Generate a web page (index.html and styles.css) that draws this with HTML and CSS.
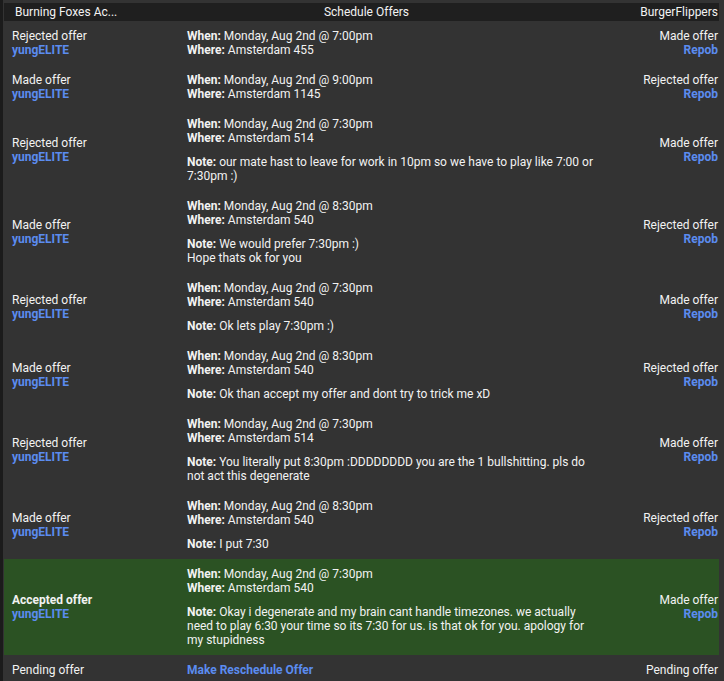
FILE: index.html
```html
<!DOCTYPE html>
<html lang="en">
<head>
  <meta charset="UTF-8" />
  <title>Schedule Offers</title>
  <link rel="stylesheet" href="styles.css">
</head>
<body>

<div class="panel">
  <div class="offers-head">
    <span class="head-left">Burning Foxes Ac...</span>
    <span class="head-mid">Schedule Offers</span>
    <span class="head-right">BurgerFlippers</span>
  </div>

  <div class="offer">
    <div class="side">Rejected offer<a class="user">yungELITE</a></div>
    <div class="details">
      <p><b>When:</b> Monday, Aug 2nd @ 7:00pm<br><b>Where:</b> Amsterdam 455</p>
    </div>
    <div class="side right">Made offer<a class="user">Repob</a></div>
  </div>

  <div class="offer">
    <div class="side">Made offer<a class="user">yungELITE</a></div>
    <div class="details">
      <p><b>When:</b> Monday, Aug 2nd @ 9:00pm<br><b>Where:</b> Amsterdam 1145</p>
    </div>
    <div class="side right">Rejected offer<a class="user">Repob</a></div>
  </div>

  <div class="offer">
    <div class="side">Rejected offer<a class="user">yungELITE</a></div>
    <div class="details">
      <p><b>When:</b> Monday, Aug 2nd @ 7:30pm<br><b>Where:</b> Amsterdam 514</p>
      <p class="note"><b>Note:</b> our mate hast to leave for work in 10pm so we have to play like 7:00 or 7:30pm :)</p>
    </div>
    <div class="side right">Made offer<a class="user">Repob</a></div>
  </div>

  <div class="offer">
    <div class="side">Made offer<a class="user">yungELITE</a></div>
    <div class="details">
      <p><b>When:</b> Monday, Aug 2nd @ 8:30pm<br><b>Where:</b> Amsterdam 540</p>
      <p class="note"><b>Note:</b> We would prefer 7:30pm :)<br>Hope thats ok for you</p>
    </div>
    <div class="side right">Rejected offer<a class="user">Repob</a></div>
  </div>

  <div class="offer">
    <div class="side">Rejected offer<a class="user">yungELITE</a></div>
    <div class="details">
      <p><b>When:</b> Monday, Aug 2nd @ 7:30pm<br><b>Where:</b> Amsterdam 540</p>
      <p class="note"><b>Note:</b> Ok lets play 7:30pm :)</p>
    </div>
    <div class="side right">Made offer<a class="user">Repob</a></div>
  </div>

  <div class="offer">
    <div class="side">Made offer<a class="user">yungELITE</a></div>
    <div class="details">
      <p><b>When:</b> Monday, Aug 2nd @ 8:30pm<br><b>Where:</b> Amsterdam 540</p>
      <p class="note"><b>Note:</b> Ok than accept my offer and dont try to trick me xD</p>
    </div>
    <div class="side right">Rejected offer<a class="user">Repob</a></div>
  </div>

  <div class="offer">
    <div class="side">Rejected offer<a class="user">yungELITE</a></div>
    <div class="details">
      <p><b>When:</b> Monday, Aug 2nd @ 7:30pm<br><b>Where:</b> Amsterdam 514</p>
      <p class="note"><b>Note:</b> You literally put 8:30pm :DDDDDDDD you are the 1 bullshitting. pls do not act this degenerate</p>
    </div>
    <div class="side right">Made offer<a class="user">Repob</a></div>
  </div>

  <div class="offer">
    <div class="side">Made offer<a class="user">yungELITE</a></div>
    <div class="details">
      <p><b>When:</b> Monday, Aug 2nd @ 8:30pm<br><b>Where:</b> Amsterdam 540</p>
      <p class="note"><b>Note:</b> I put 7:30</p>
    </div>
    <div class="side right">Rejected offer<a class="user">Repob</a></div>
  </div>

  <div class="offer accepted">
    <div class="side"><b>Accepted offer</b><a class="user">yungELITE</a></div>
    <div class="details">
      <p><b>When:</b> Monday, Aug 2nd @ 7:30pm<br><b>Where:</b> Amsterdam 540</p>
      <p class="note"><b>Note:</b> Okay i degenerate and my brain cant handle timezones. we actually need to play 6:30 your time so its 7:30 for us. is that ok for you. apology for my stupidness</p>
    </div>
    <div class="side right">Made offer<a class="user">Repob</a></div>
  </div>

  <div class="offer">
    <div class="side">Pending offer</div>
    <div class="details">
      <a class="user">Make Reschedule Offer</a>
    </div>
    <div class="side right">Pending offer</div>
  </div>
</div>

</body>
</html>
```

FILE: styles.css
```css
body, html {
  margin: 0;
  padding: 0;
  background: #1b1b1b;
  font-family: Roboto, 'Liberation Sans', sans-serif;
  font-size: 12px;
  line-height: 14px;
  color: #f2f2f2;
  overflow: hidden;
}

.panel {
  margin-left: 3px;
  padding: 3px 5px 0 1px;
  background: #333333;
  min-height: 678px;
}

.offers-head {
  display: grid;
  grid-template-columns: 1fr auto 1fr;
  height: 18px;
  line-height: 18px;
  padding: 0 1px 0 11px;
  background: #1f1f1f;
}

.head-mid {
  text-align: center;
}

.head-right {
  text-align: right;
}

.offer {
  display: grid;
  grid-template-columns: 175px 1fr 115px;
  padding: 8px 0;
}

.offer.accepted {
  background: #2b5223;
}

.side {
  align-self: center;
  padding: 0 8px;
}

.side.right {
  text-align: right;
  padding: 0 1px 0 8px;
}

.user {
  display: block;
  color: #5b8cf0;
  font-weight: bold;
  cursor: pointer;
}

.details {
  padding: 0 8px;
}

.details p {
  margin: 0;
}

.details .note {
  margin-top: 10px;
}
```
